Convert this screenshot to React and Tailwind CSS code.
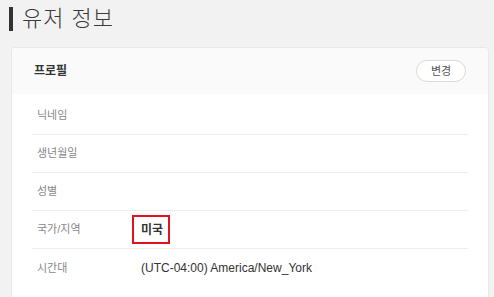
export default function App() {
  const rows = [
    { label: '닉네임', value: '' },
    { label: '생년월일', value: '' },
    { label: '성별', value: '' },
    { label: '국가/지역', value: '미국', highlight: true },
    { label: '시간대', value: '(UTC-04:00) America/New_York' },
  ];

  return (
    <div
      className="w-[494px] h-[297px] overflow-hidden bg-[#f2f2f2] pl-[11px] pr-[5px]"
      style={{ fontFamily: '"Liberation Sans", "Noto Sans CJK KR", sans-serif' }}
    >
      {/* Title */}
      <header className="flex items-center h-[36px] -ml-[2px] pt-[1px]">
        <span className="w-[4px] h-[24px] bg-[#333] mr-[9px]" />
        <h1 className="text-[22px] leading-none text-[#3a3a3a] font-light tracking-[1px]">유저 정보</h1>
      </header>

      {/* Card */}
      <section className="mt-[11px] bg-white border border-[#e8e8e8] rounded-[4px] overflow-hidden">
        <div className="flex items-center justify-between h-[46px] bg-[#fafafa] pl-[22px] pr-[22px]">
          <h2 className="text-[12px] font-bold text-[#333]">프로필</h2>
          <button className="w-[50px] h-[22px] rounded-full border border-[#d9d9d9] bg-white text-[11px] text-[#555]">
            변경
          </button>
        </div>

        <div className="px-[20px] pt-[3px] pb-[30px]">
          {rows.map((row, i) => (
            <div
              key={row.label}
              className={`flex items-center h-[38px] ${i < rows.length - 1 ? 'border-b border-[#eee]' : ''}`}
            >
              <span className="w-[109px] pl-[5px] text-[11px] text-[#888]">{row.label}</span>
              {row.highlight ? (
                <span className="relative text-[12px] font-bold text-[#333]">
                  {row.value}
                  <span className="absolute -left-[9px] -right-[7px] -top-[6px] -bottom-[5px] border-2 border-[#e0141e]" />
                </span>
              ) : (
                <span className="text-[12px] text-[#333]">{row.value}</span>
              )}
            </div>
          ))}
        </div>
      </section>
    </div>
  );
}
